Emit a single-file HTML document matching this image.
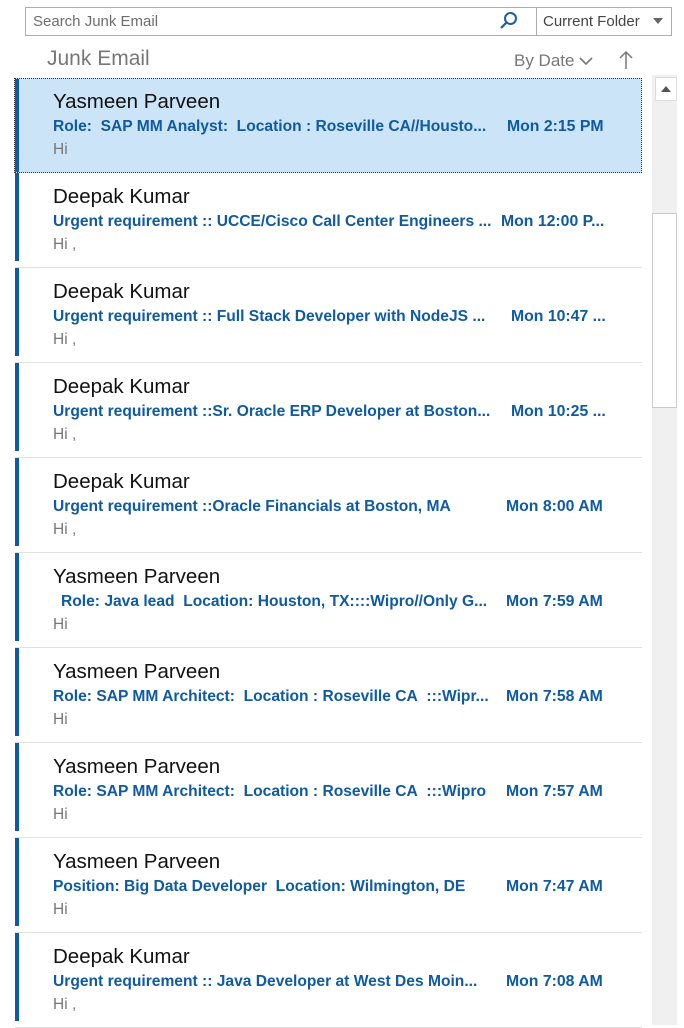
<!DOCTYPE html>
<html><head><meta charset="utf-8"><style>
*{margin:0;padding:0;box-sizing:border-box}
body{width:684px;height:1025px;background:#fff;position:relative;overflow:hidden;font-family:"Liberation Sans",sans-serif}
.search{position:absolute;left:25px;top:7px;width:647px;height:29px;border:1px solid #abadb3}
.search .ph{position:absolute;left:7px;top:5px;font-size:15px;color:#6d6d6d}
.search .div{position:absolute;left:510px;top:0;width:1px;height:27px;background:#abadb3}
.search .cf{position:absolute;left:517px;top:5px;font-size:15px;color:#444}
.title{position:absolute;left:47px;top:47px;font-size:21px;color:#777}
.bydate{position:absolute;left:514px;top:51px;font-size:17px;color:#777}
.row{position:absolute;left:15px;width:627px;height:95px;border-bottom:1px solid #e1e1e1}
.bar{position:absolute;left:0;top:0;width:4px;height:88px;background:#0f5aa0}
.name{position:absolute;left:38px;top:12px;font-size:20.5px;color:#111;white-space:nowrap}
.subj{position:absolute;left:38px;top:40px;font-size:15.6px;font-weight:bold;color:#0f5aa0;white-space:nowrap}
.date{position:absolute;top:40px;font-size:15.8px;font-weight:bold;color:#0f5aa0;white-space:nowrap}
.prev{position:absolute;left:38px;top:63px;font-size:15.5px;color:#777}
.sel{background:#cce4f7;outline:1px dotted #333;outline-offset:-1px;left:14px;width:628px}
.sb{position:absolute;left:652px;top:75px;width:25px;height:950px;background:#f0f0f0}
.up{position:absolute;left:3px;top:2px;width:22px;height:24px;background:#fff;border:1px solid #ddd}
.thumb{position:absolute;left:0;top:138px;width:25px;height:195px;background:#fff;border:1px solid #ccc}
</style></head><body>
<div class="search"><span class="ph">Search Junk Email</span>
<svg style="position:absolute;left:473px;top:3px" width="20" height="20" viewBox="0 0 20 20"><circle cx="11.5" cy="7.5" r="5.5" fill="none" stroke="#1a5fa8" stroke-width="2"/><line x1="7.5" y1="11.5" x2="2" y2="17" stroke="#1a5fa8" stroke-width="2.2"/></svg>
<div class="div"></div><span class="cf">Current Folder</span>
<svg style="position:absolute;left:627px;top:10px" width="11" height="7"><polygon points="0,0 10,0 5,6" fill="#666"/></svg></div>
<div class="title">Junk Email</div>
<div class="bydate">By Date <svg width="14" height="10" viewBox="0 0 14 10"><polyline points="1,2 7,8 13,2" fill="none" stroke="#777" stroke-width="1.6"/></svg></div>
<svg style="position:absolute;left:618px;top:50px" width="16" height="20" viewBox="0 0 16 20"><line x1="8" y1="2" x2="8" y2="19" stroke="#777" stroke-width="1.5"/><polyline points="2,8 8,2 14,8" fill="none" stroke="#777" stroke-width="1.5"/></svg>

<div class="row sel" style="top:78px;height:95px;border-bottom:none"><div class="bar" style="left:1px;height:93px;top:1px"></div><div class="name" style="left:39px">Yasmeen Parveen</div><div class="subj" style="left:39px">Role:&nbsp; SAP MM Analyst:&nbsp; Location : Roseville CA//Housto...</div><div class="date" style="left:493px">Mon 2:15 PM</div><div class="prev" style="left:39px">Hi</div></div>
<div class="row" style="top:173px"><div class="bar"></div><div class="name">Deepak Kumar</div><div class="subj">Urgent requirement :: UCCE/Cisco Call Center Engineers ...</div><div class="date" style="left:486px">Mon 12:00 P...</div><div class="prev">Hi ,</div></div>
<div class="row" style="top:268px"><div class="bar"></div><div class="name">Deepak Kumar</div><div class="subj">Urgent requirement :: Full Stack Developer with NodeJS ...</div><div class="date" style="left:496px">Mon 10:47 ...</div><div class="prev">Hi ,</div></div>
<div class="row" style="top:363px"><div class="bar"></div><div class="name">Deepak Kumar</div><div class="subj">Urgent requirement ::Sr. Oracle ERP Developer at Boston...</div><div class="date" style="left:496px">Mon 10:25 ...</div><div class="prev">Hi ,</div></div>
<div class="row" style="top:458px"><div class="bar"></div><div class="name">Deepak Kumar</div><div class="subj">Urgent requirement ::Oracle Financials at Boston, MA</div><div class="date" style="left:491px">Mon 8:00 AM</div><div class="prev">Hi ,</div></div>
<div class="row" style="top:553px"><div class="bar"></div><div class="name">Yasmeen Parveen</div><div class="subj" style="left:46px">Role: Java lead&nbsp; Location: Houston, TX::::Wipro//Only G...</div><div class="date" style="left:491px">Mon 7:59 AM</div><div class="prev">Hi</div></div>
<div class="row" style="top:648px"><div class="bar"></div><div class="name">Yasmeen Parveen</div><div class="subj">Role: SAP MM Architect:&nbsp; Location : Roseville CA&nbsp; :::Wipr...</div><div class="date" style="left:491px">Mon 7:58 AM</div><div class="prev">Hi</div></div>
<div class="row" style="top:743px"><div class="bar"></div><div class="name">Yasmeen Parveen</div><div class="subj">Role: SAP MM Architect:&nbsp; Location : Roseville CA&nbsp; :::Wipro</div><div class="date" style="left:491px">Mon 7:57 AM</div><div class="prev">Hi</div></div>
<div class="row" style="top:838px"><div class="bar"></div><div class="name">Yasmeen Parveen</div><div class="subj">Position: Big Data Developer&nbsp; Location: Wilmington, DE</div><div class="date" style="left:491px">Mon 7:47 AM</div><div class="prev">Hi</div></div>
<div class="row" style="top:933px"><div class="bar"></div><div class="name">Deepak Kumar</div><div class="subj">Urgent requirement :: Java Developer at West Des Moin...</div><div class="date" style="left:491px">Mon 7:08 AM</div><div class="prev">Hi ,</div></div>

<div class="sb"><div class="up"><svg style="position:absolute;left:5px;top:8px" width="11" height="7"><polygon points="0,6 10,6 5,0" fill="#555"/></svg></div><div class="thumb"></div></div>
</body></html>
